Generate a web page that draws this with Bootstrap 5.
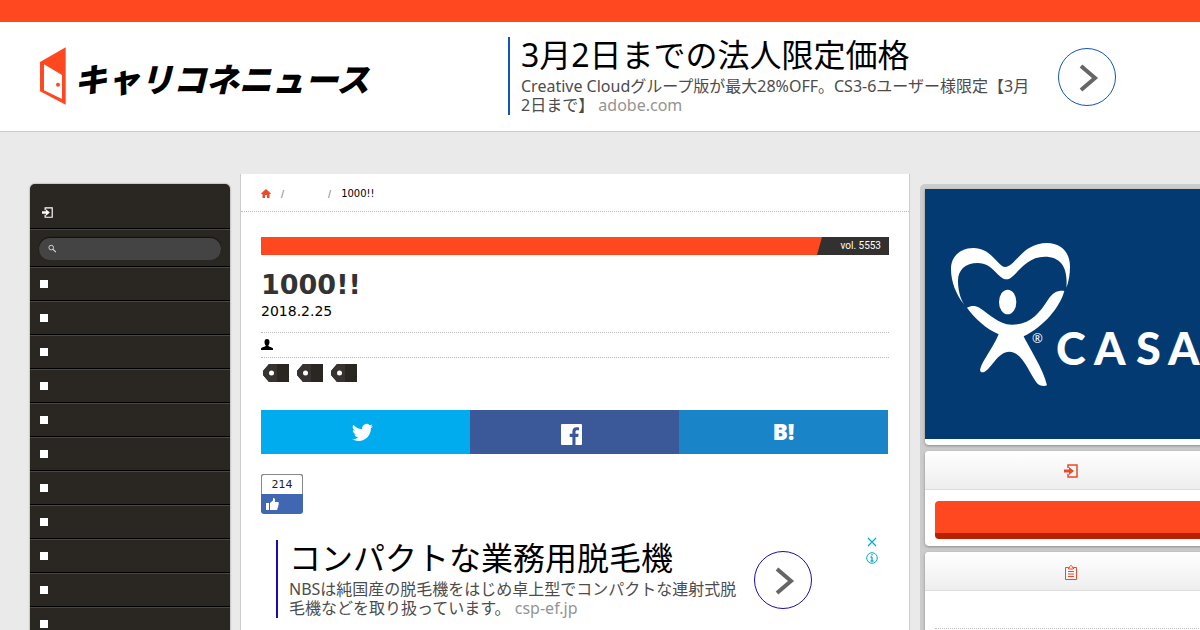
<!DOCTYPE html>
<html lang="ja">
<head>
<meta charset="utf-8">
<meta name="viewport" content="width=device-width, initial-scale=1">
<title>1000!! | キャリコネニュース</title>
<link href="https://cdn.jsdelivr.net/npm/bootstrap@5.3.0/dist/css/bootstrap.min.css" rel="stylesheet">
<style>
  :root { --accent: #ff4820; --dark: #2a2622; }
  body { background: #eaeaea; color: #000; font-family: "DejaVu Sans", "Noto Sans CJK JP", sans-serif; font-size: 14px; line-height: 20px; }
  svg { display: block; }
  .top-line { height: 22px; background: var(--accent); }
  .site-header { height: 110px; padding: 0 0 2px 40px; border-bottom: 1px solid #ccc; }
  .site-logo { width: 468px; gap: 8px; color: #000; }
  .site-logo-text { font: italic 900 33px/40px "Noto Sans CJK JP", sans-serif; padding-top: 4px; }

  .ad-unit { font-family: "Noto Sans", "Noto Sans CJK JP", sans-serif; border-left: 2px solid #1155bb; padding-left: 11px; color: #000; }
  .ad-unit:hover { color: #000; }
  .ad-text { min-width: 537px; }
  .ad-title { font-size: 32px; line-height: 36px; padding-bottom: 4px; }
  .ad-copy { font-size: 16px; line-height: 19px; color: #4c4c4c; }
  .ad-copy cite { color: #949494; font-style: normal; }
  .ad-arrow { width: 58px; height: 58px; margin-top: 2px; border: 1px solid #1155bb; }
  .ad-inline { border-color: #1a0dab; margin-left: 15px; }
  .ad-inline .ad-text { min-width: 465px; }
  .ad-inline .ad-arrow { border-color: #1a0dab; }
  .ad-tools { margin: -3px 11px 0 auto; color: #00aecd; }

  .page-columns { min-width: 1222px; padding: 42px 0 0 30px; gap: 10px; }
  .side-menu { width: 200px; margin-top: 10px; background: var(--dark); border-radius: 5px 5px 0 0; box-shadow: 0 0 2px #777; }
  .menu-row { height: 34px; padding: 0 10px; border-top: 1px solid #4a4743; border-bottom: 1px solid #000; }
  .menu-login { height: 45px; padding: 12px 12px 0; border-top: 0; }
  .menu-search { height: 38px; padding: 1px 9px 0; }
  .menu-bullet { width: 8px; height: 8px; background: #fff; }
  .search-pill { background: #444; border-radius: 12px; height: 22px; padding: 0 9px; gap: 4px; box-shadow: 0 -1px 1px #111; }
  .search-pill input { background: transparent; border: 0; outline: 0; color: #fff; font-size: 12px; min-width: 0; }

  .article-pane { background: #fff; border: solid #ccc; border-width: 0 1px; min-height: 700px; }
  .crumbs { height: 38px; padding: 2px 20px 0; border-bottom: 1px dotted #bbb; font-size: 10px; }
  .crumbs .sep { color: #888; font-family: "Liberation Sans", sans-serif; font-size: 11px; }
  .sep-first { margin: 0 44px 0 10px; }
  .sep-last { margin-right: 10px; }
  .article-body { padding: 25px 20px 0; }
  .volume-bar { height: 18px; background: var(--accent); }
  .volume-tag { width: 72px; padding-right: 8px; background: #333130; color: #fff; clip-path: polygon(5px 0, 100% 0, 100% 100%, 0 100%); font: 400 10px/18px Roboto, "Liberation Sans", sans-serif; }
  .article-title { font-size: 27px; line-height: 32px; font-weight: 700; color: #333; margin: 14px 0 0; }
  .article-date { padding-bottom: 11px; border-bottom: 1px dotted #bbb; }
  .article-author { height: 25px; padding-bottom: 2px; border-bottom: 1px dotted #bbb; }
  .tag-list { gap: 8px; padding: 6px 2px 0; }
  .share-row { margin: 28px 1px 20px 0; }
  .share-btn { height: 44px; padding-right: 5px; color: #fff; }
  .share-tw { background: #00acee; }
  .share-fb { background: #3b5998; }
  .share-hb { padding-right: 0; background: #1a84c9; font: 800 23px/42px "Open Sans", sans-serif; }
  .share-row .share-btn { flex: 0 0 33.3333%; }
  .like-box { width: 42px; height: 40px; border-radius: 3px; background: #4267b2; font-size: 11px; line-height: 20px; padding: 0; margin-bottom: 26px; }
  .like-count { height: 20px; background: #fff; color: #222; border: 1px solid #888; border-bottom: 0; border-radius: 3px 3px 0 0; }

  .right-column { width: 302px; margin-top: 10px; padding: 5px; background: #ccc; border-radius: 5px 5px 0 0; }
  .side-panel { background: #fff; border-radius: 4px; margin-bottom: 6px; overflow: hidden; box-shadow: 0 1px 3px #888; }
  .banner-panel { padding-bottom: 6px; border-radius: 0 0 4px 4px; }
  .panel-head { height: 39px; padding-top: 2px; background: linear-gradient(#fff, #eee); border-bottom: 1px solid #ddd; color: #ea4a28; }
  .panel-foot { padding: 11px 10px 7px; }
  .login-btn { display: block; height: 38px; background: var(--accent); border: 0; border-bottom: 6px solid #b92000; border-radius: 4px; }
  .rank-row { height: 38px; margin: 0 10px; border-bottom: 1px dotted #bbb; }
</style>
</head>
<body>
<svg width="0" height="0" class="position-absolute" aria-hidden="true">
  <symbol id="ic-login" viewBox="0 0 14 14"><path d="M4 4V1h9v12H4v-3" fill="none" stroke="currentColor" stroke-width="1.5"/><path d="M0 5.500h5V3L10 7l-5 4V8.500H0z" fill="currentColor"/></symbol>
  <symbol id="ic-arrow" viewBox="0 0 56 56"><path d="M22 17l14 12-14 12" fill="none" stroke="#666" stroke-width="4"/></symbol>
  <symbol id="ic-tag" viewBox="0 0 26 18"><path d="M0 7l6-7h20v18H6L0 11z" fill="#2a2622"/><path d="M0 7l6-7h8v18H6L0 11z" fill="#363331"/><circle cx="8.500" cy="9" r="2.500" fill="#fff"/></symbol>
</svg>
<div class="vh-100 overflow-hidden">
  <div class="top-line"></div>
  <header class="site-header bg-white d-flex align-items-center">
    <a href="#" class="site-logo d-flex align-items-center text-decoration-none flex-shrink-0">
      <svg width="26" height="58" viewBox="60 53 78 172" aria-hidden="true"><path fill="#ff4820" fill-rule="evenodd" d="M60 97L137 53V225L60 185zM72 104V182L126 208V136z"/><circle cx="114" cy="165" r="6" fill="#ff4820"/></svg>
      <span class="site-logo-text text-nowrap">キャリコネニュース</span>
    </a>
    <a href="#" class="ad-unit d-flex align-items-center text-decoration-none flex-shrink-0">
      <span class="ad-text text-nowrap"><span class="ad-title d-block">3月2日までの法人限定価格</span>
      <span class="ad-copy d-block">Creative Cloudグループ版が最大28%OFF。CS3-6ユーザー様限定【3月<br>2日まで】 <cite>adobe.com</cite></span></span>
      <span class="ad-arrow rounded-circle"><svg width="56" height="56"><use href="#ic-arrow"/></svg></span>
    </a>
  </header>

  <div class="page-columns d-flex align-items-start">
    <nav class="side-menu flex-shrink-0" aria-label="メニュー">
      <a href="#" class="menu-row menu-login d-flex align-items-center text-white" aria-label="ログイン"><svg width="11" height="11"><use href="#ic-login"/></svg></a>
      <div class="menu-row menu-search d-flex align-items-center">
        <label class="search-pill d-flex align-items-center w-100">
          <svg width="9" height="9" viewBox="0 0 9 9" fill="none" stroke="#ddd"><circle cx="3.500" cy="3.500" r="2.500"/><path d="M5.500 5.500l3 3" stroke-width="1.300"/></svg>
          <input type="search" class="w-100" aria-label="検索">
        </label>
      </div>
      <a href="#" class="menu-row d-flex align-items-center" aria-label="項目1"><span class="menu-bullet"></span></a>
      <a href="#" class="menu-row d-flex align-items-center" aria-label="項目2"><span class="menu-bullet"></span></a>
      <a href="#" class="menu-row d-flex align-items-center" aria-label="項目3"><span class="menu-bullet"></span></a>
      <a href="#" class="menu-row d-flex align-items-center" aria-label="項目4"><span class="menu-bullet"></span></a>
      <a href="#" class="menu-row d-flex align-items-center" aria-label="項目5"><span class="menu-bullet"></span></a>
      <a href="#" class="menu-row d-flex align-items-center" aria-label="項目6"><span class="menu-bullet"></span></a>
      <a href="#" class="menu-row d-flex align-items-center" aria-label="項目7"><span class="menu-bullet"></span></a>
      <a href="#" class="menu-row d-flex align-items-center" aria-label="項目8"><span class="menu-bullet"></span></a>
      <a href="#" class="menu-row d-flex align-items-center" aria-label="項目9"><span class="menu-bullet"></span></a>
      <a href="#" class="menu-row d-flex align-items-center" aria-label="項目10"><span class="menu-bullet"></span></a>
      <a href="#" class="menu-row d-flex align-items-center" aria-label="項目11"><span class="menu-bullet"></span></a>
    </nav>

    <main class="article-pane flex-grow-1">
      <nav class="crumbs d-flex align-items-center" aria-label="パンくず">
        <a href="#" aria-label="ホーム"><svg width="10" height="9" viewBox="0 0 10 9" fill="#ea4a28"><path d="M5 0l5 4.500-.8.800L8.500 4.700V9H6V6H4v3H1.500V4.700l-.7.600L0 4.500z"/></svg></a>
        <span class="sep sep-first">/</span>
        <span class="sep sep-last">/</span>
        <span>1000!!</span>
      </nav>
      <article class="article-body">
        <div class="volume-bar d-flex justify-content-end"><span class="volume-tag text-end">vol. 5553</span></div>
        <h1 class="article-title">1000!!</h1>
        <div class="article-date">2018.2.25</div>
        <div class="article-author d-flex align-items-center"><svg width="12" height="11" viewBox="0 0 12 11"><path d="M6 0c1.700 0 2.500 1.200 2.500 3S7.800 6 7.200 6.600c0 1.400 4.300 1.600 4.800 3V11H0V9.600c.5-1.400 4.800-1.600 4.800-3C4.200 6 3.500 4.800 3.500 3S4.300 0 6 0z"/></svg></div>
        <div class="tag-list d-flex">
          <a href="#" aria-label="タグ1"><svg width="26" height="18"><use href="#ic-tag"/></svg></a>
          <a href="#" aria-label="タグ2"><svg width="26" height="18"><use href="#ic-tag"/></svg></a>
          <a href="#" aria-label="タグ3"><svg width="26" height="18"><use href="#ic-tag"/></svg></a>
        </div>
        <div class="share-row row g-0">
          <a href="#" class="share-btn share-tw col d-flex align-items-center justify-content-center" aria-label="Twitter"><svg width="21" height="21" viewBox="0 0 24 24" fill="#fff"><path d="M23.950 4.570a10 10 0 0 1-2.820.770 4.960 4.960 0 0 0 2.160-2.720c-.95.560-2 .960-3.130 1.190a4.920 4.920 0 0 0-8.380 4.480C7.690 8.100 4.070 6.130 1.640 3.160a4.920 4.920 0 0 0 1.520 6.570 4.900 4.900 0 0 1-2.230-.610v.060a4.920 4.920 0 0 0 3.950 4.830 5 5 0 0 1-2.210.080 4.940 4.940 0 0 0 4.600 3.420A9.870 9.870 0 0 1 0 19.540a13.990 13.990 0 0 0 7.550 2.210c9.050 0 14-7.500 14-13.980l-.02-.640a10 10 0 0 0 2.420-2.560z"/></svg></a>
          <a href="#" class="share-btn share-fb col d-flex align-items-center justify-content-center pt-1" aria-label="Facebook"><svg width="21" height="21" viewBox="0 0 21 21"><path fill="#fff" d="M1 0h19a1 1 0 0 1 1 1v19a1 1 0 0 1-1 1h-5.500v-8h2.700l.4-3.200h-3.100V7.800c0-.9.300-1.500 1.600-1.500H18V3.400C17.500 3.300 16.600 3.200 15.600 3.200c-2.500 0-4.200 1.500-4.200 4.200v2.400H8.700V13h2.700v8H1a1 1 0 0 1-1-1V1a1 1 0 0 1 1-1z"/></svg></a>
          <a href="#" class="share-btn share-hb col text-center text-decoration-none">B!</a>
        </div>
        <button type="button" class="like-box border-0 d-flex flex-column" aria-label="いいね！ 214">
          <span class="like-count w-100 text-center">214</span>
          <svg class="mt-1 ms-1" width="14" height="12" viewBox="0 0 14 12" fill="#fff"><path d="M1 5h3v7H1zM5 5l3-2.500V0c2 0 2.500 1.500 1.800 4H13c1 0 1 1.200.5 1.600.4.600.3 1.300-.2 1.700.2.600.1 1.200-.4 1.600.1.700-.1 1.200-.5 1.500.1.900-.3 1.600-1.400 1.600H5z"/></svg>
        </button>
        <div class="d-flex align-items-start">
          <a href="#" class="ad-unit ad-inline d-flex align-items-center text-decoration-none">
            <span class="ad-text text-nowrap"><span class="ad-title d-block">コンパクトな業務用脱毛機</span>
            <span class="ad-copy d-block">NBSは純国産の脱毛機をはじめ卓上型でコンパクトな連射式脱<br>毛機などを取り扱っています。 <cite>csp-ef.jp</cite></span></span>
            <span class="ad-arrow rounded-circle"><svg width="56" height="56"><use href="#ic-arrow"/></svg></span>
          </a>
          <svg class="ad-tools" width="12" height="28" viewBox="0 0 12 28" fill="none" stroke="currentColor"><path d="M2 1l8 8M10 1l-8 8" stroke-width="1.200"/><circle cx="6" cy="21" r="5.300"/><path d="M6 20v4M4.500 20H6M4.500 24h3M6 17v1.500" stroke-width="1.300"/></svg>
        </div>
      </article>
    </main>

    <aside class="right-column flex-shrink-0">
      <div class="side-panel banner-panel">
        <svg class="w-100" viewBox="0 0 292 250" role="img" aria-label="CASA">
          <rect width="292" height="250" fill="#043a72"/>
          <g fill="#fff" transform="translate(-15 -19) scale(.33333)">
            <path d="M163 405C139 374 123 337 123 297C123 260 150 234 190 234C246 234 263 291 286 291C316 291 336 219 411 219C453 219 480 247 480 290C480 314 476 336 469 353C474 300 458 260 404 260C340 260 316 328 290 328C263 328 251 279 203 279C166 279 144 300 144 332C144 360 151 385 163 405z"/>
            <ellipse cx="293" cy="396" rx="26" ry="37"/>
            <path d="M171 413C183 407 196 406 208 413C238 431 264 463 305 464C360 465 389 429 413 391C429 366 444 361 463 363C450 412 401 470 341 499C356 532 399 594 411 646C402 650 388 648 380 638C357 608 338 546 298 545C263 546 247 592 224 605C215 610 208 605 211 596C217 572 247 538 266 493C229 476 194 446 171 413z"/>
          </g>
          <text x="107" y="154" fill="#fff" font-family="Open Sans, sans-serif" font-size="13">®</text>
          <text x="131 169 211 243" y="176" fill="#fff" font-family="Lato, sans-serif" font-weight="900" font-size="45">CASA</text>
        </svg>
      </div>
      <section class="side-panel">
        <div class="panel-head d-flex align-items-center justify-content-center"><svg width="14" height="14"><use href="#ic-login"/></svg></div>
        <div class="panel-foot"><button type="button" class="login-btn w-100" aria-label="ログイン"></button></div>
      </section>
      <section class="side-panel">
        <div class="panel-head d-flex align-items-center justify-content-center"><svg width="12" height="15" viewBox="0 0 12 15" fill="none" stroke="currentColor"><path d="M3.500 2.500h-3v12h11v-12h-3"/><path d="M3.500 4V2.500h1C4.500 0 7.500 0 7.500 2.500h1V4zM3 6.500h6M3 9h6M3 11.500h6"/></svg></div>
        <div class="rank-row"></div>
        <div class="rank-row"></div>
      </section>
    </aside>
  </div>
</div>
<script src="https://cdn.jsdelivr.net/npm/bootstrap@5.3.0/dist/js/bootstrap.bundle.min.js"></script>
</body>
</html>
